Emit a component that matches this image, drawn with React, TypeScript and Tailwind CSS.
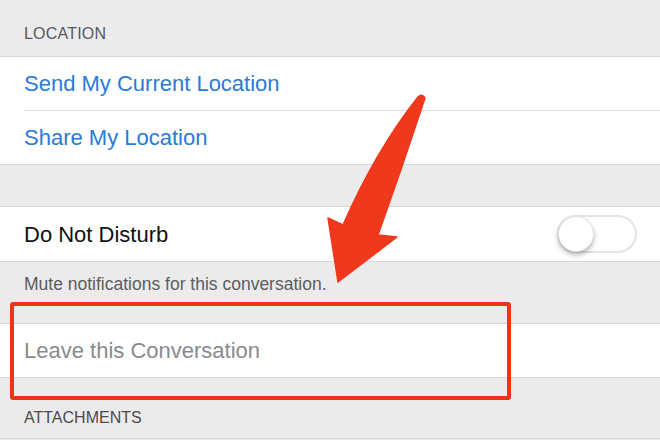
import React from 'react';

const font = { fontFamily: '"Liberation Sans", Arial, sans-serif' };

const Toggle: React.FC = () => (
  <div className="relative w-[80px] h-[38px] rounded-full border-2 border-[#e4e4e4] bg-white">
    <div className="absolute left-[-1px] top-[-1px] w-[36px] h-[36px] rounded-full bg-white shadow-[0_3px_5px_rgba(0,0,0,0.28)] border border-[#e2e2e2]" />
  </div>
);

const Arrow: React.FC = () => (
  <svg className="absolute left-0 top-0 pointer-events-none" width="660" height="440" viewBox="0 0 660 440">
    <path
      d="M418 97 Q422 93 425 98 Q402 168 378 235 L397 237 L338 282 L328 218 L343 225 Q376 150 418 97 Z"
      fill="#f0381d"
      stroke="#f0381d"
      strokeWidth="1.5"
      strokeLinejoin="round"
    />
  </svg>
);

export default function App() {
  return (
    <div className="relative w-[660px] h-[440px] overflow-hidden bg-[#ebebeb]" style={font}>
      <div className="h-[56px] pl-6 pt-[24px] text-[16px] leading-[20px] text-[#58585c] tracking-[0.2px]">LOCATION</div>

      <div className="bg-white border-y border-[#d8d8d8]">
        <div className="h-[53px] flex items-center pl-6 text-[22px] text-[#2b7ad6]">Send My Current Location</div>
        <div className="ml-6 border-t border-[#dedede]" />
        <div className="h-[53px] flex items-center pl-6 text-[22px] text-[#2b7ad6]">Share My Location</div>
      </div>

      <div className="h-[41px]" />

      <div className="bg-white border-y border-[#d8d8d8] h-[56px] flex items-center justify-between pl-6 pr-[23px]">
        <span className="text-[22px] text-[#111]">Do Not Disturb</span>
        <Toggle />
      </div>

      <div className="h-[61px] pl-6 pt-[12px] text-[17.5px] leading-[20px] text-[#5c5c60]">Mute notifications for this conversation.</div>

      <div className="bg-white border-y border-[#d8d8d8] h-[55px] flex items-center pl-6 text-[22px] text-[#8a8a8e]">Leave this Conversation</div>

      <div className="h-[61px] border-b border-[#d8d8d8] pl-6 pt-[30px] text-[16px] leading-[20px] text-[#4a4a4e]">ATTACHMENTS</div>

      <div className="absolute left-[10px] top-[302px] w-[501px] h-[98px] border-[4px] border-[#ee3418] rounded-[3px]" />
      <Arrow />
    </div>
  );
}
